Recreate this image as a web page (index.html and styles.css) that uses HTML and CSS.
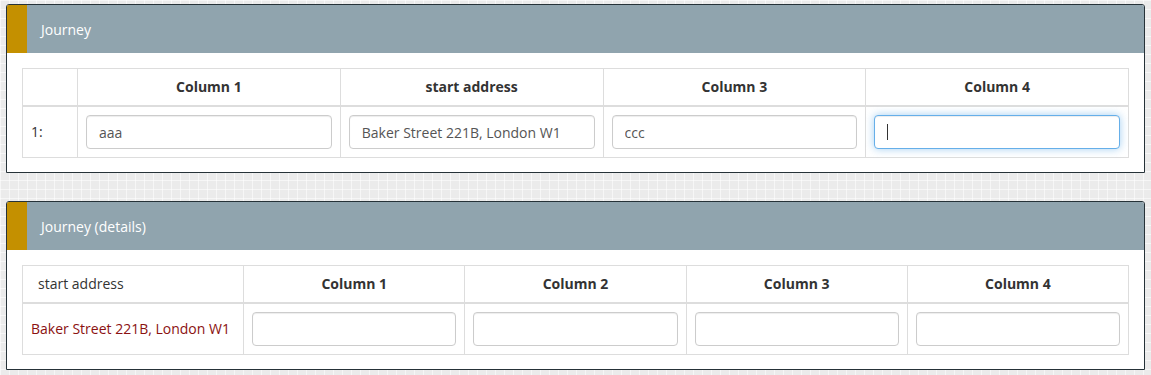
FILE: index.html
```html
<!DOCTYPE html>
<html lang="en">
<head>
    <meta charset="UTF-8">
    <meta name="viewport" content="width=device-width, initial-scale=1.0">
    <title>Journey</title>
    <link rel="stylesheet" href="styles.css">
</head>
<body>
    <div class="page">
        <div class="panel">
            <div class="panel-heading">
                <span class="marker"></span>
                <span class="panel-title">Journey</span>
            </div>
            <div class="panel-body">
                <table class="grid grid-rows">
                    <thead>
                        <tr>
                            <th class="num-col"></th>
                            <th>Column 1</th>
                            <th>start address</th>
                            <th>Column 3</th>
                            <th>Column 4</th>
                        </tr>
                    </thead>
                    <tbody>
                        <tr>
                            <td>1:</td>
                            <td><input type="text" class="field" value="aaa"></td>
                            <td><input type="text" class="field" value="Baker Street 221B, London W1"></td>
                            <td><input type="text" class="field" value="ccc"></td>
                            <td><div class="caret-wrap"><input type="text" class="field focused" value=""></div></td>
                        </tr>
                    </tbody>
                </table>
            </div>
        </div>

        <div class="panel">
            <div class="panel-heading">
                <span class="marker"></span>
                <span class="panel-title">Journey (details)</span>
            </div>
            <div class="panel-body">
                <table class="grid grid-details">
                    <thead>
                        <tr>
                            <th class="label-head">start address</th>
                            <th>Column 1</th>
                            <th>Column 2</th>
                            <th>Column 3</th>
                            <th>Column 4</th>
                        </tr>
                    </thead>
                    <tbody>
                        <tr>
                            <td class="address">Baker Street 221B, London W1</td>
                            <td><input type="text" class="field"></td>
                            <td><input type="text" class="field"></td>
                            <td><input type="text" class="field"></td>
                            <td><input type="text" class="field"></td>
                        </tr>
                    </tbody>
                </table>
            </div>
        </div>
    </div>
</body>
</html>
```

FILE: styles.css
```css
body {
    margin: 0;
    font-family: "Open Sans", "Liberation Sans", sans-serif;
    font-size: 14px;
    color: #333333;
    background-color: #ebebeb;
    background-image:
        linear-gradient(90deg, rgba(255, 255, 255, 0.55) 1px, transparent 1px),
        linear-gradient(rgba(255, 255, 255, 0.55) 1px, transparent 1px);
    background-size: 9px 9px;
}
.page {
    padding: 4px 6px 0 6px;
    display: flex;
    flex-direction: column;
    gap: 28px;
}
.panel {
    background-color: #ffffff;
    border: 1px solid #263238;
    border-radius: 3px 3px 0 0;
}
.panel-heading {
    display: flex;
    align-items: center;
    height: 48px;
    background-color: #90a4ae;
    border-radius: 2px 2px 0 0;
}
.marker {
    align-self: stretch;
    width: 20px;
    background-color: #c49000;
    border-radius: 2px 0 0 0;
}
.panel-title {
    color: #ffffff;
    padding: 1px 0 0 14px;
    line-height: 20px;
}
.panel-body {
    padding: 15px 15px 14px 15px;
}
.grid {
    width: 100%;
    border-collapse: collapse;
    table-layout: fixed;
}
.grid th, .grid td {
    border: 1px solid #dddddd;
    padding: 8px;
    line-height: 20px;
    vertical-align: middle;
}
.grid th {
    font-weight: bold;
    text-align: center;
    border-bottom-width: 2px;
}
.grid .num-col {
    width: 38px;
}
.grid .label-head {
    font-weight: normal;
    text-align: left;
    padding-left: 15px;
}
.address {
    color: #8b1111;
}
.field {
    display: block;
    box-sizing: border-box;
    width: 100%;
    height: 34px;
    padding: 6px 12px;
    font-family: inherit;
    font-size: 14px;
    color: #555555;
    background-color: #ffffff;
    border: 1px solid #cccccc;
    border-radius: 4px;
    box-shadow: inset 0 1px 1px rgba(0, 0, 0, 0.075);
    outline: none;
}
.field.focused {
    border-color: #66afe9;
    box-shadow: inset 0 1px 1px rgba(0, 0, 0, 0.075), 0 0 8px rgba(102, 175, 233, 0.6);
}
.caret-wrap {
    position: relative;
}
.caret-wrap::after {
    content: "";
    position: absolute;
    left: 13px;
    top: 9px;
    width: 1px;
    height: 16px;
    background-color: #333333;
}
```
